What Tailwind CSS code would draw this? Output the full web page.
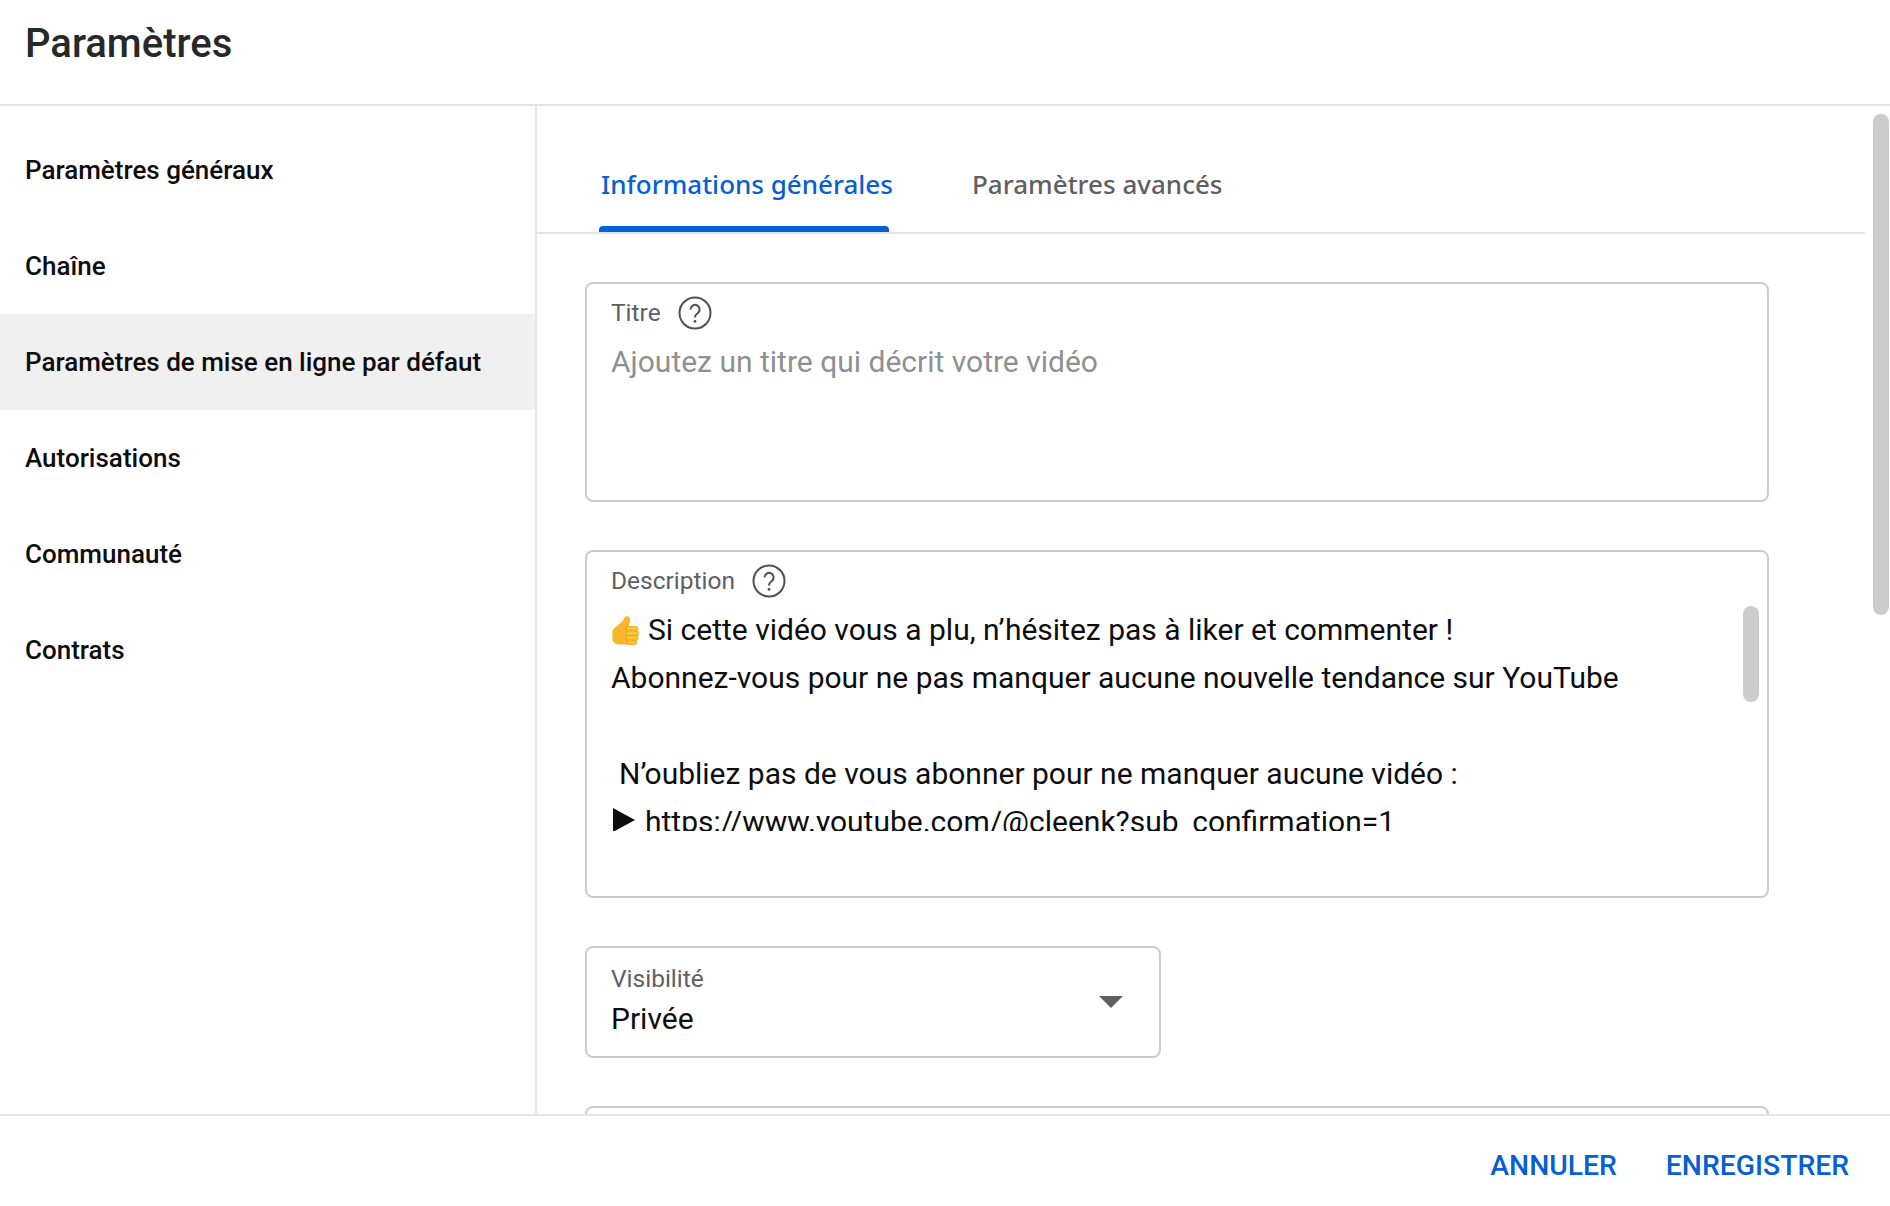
<!DOCTYPE html>
<html lang="fr">
<head>
    <meta charset="UTF-8">
    <meta name="viewport" content="width=device-width, initial-scale=1.0">
    <title>Paramètres</title>
    <script src="https://cdn.jsdelivr.net/npm/@tailwindcss/browser@4"></script>
</head>
<body class="h-screen flex flex-col overflow-hidden bg-white font-['Roboto',sans-serif] text-[#0d0d0d]">
    <header class="h-[106px] shrink-0 border-b-2 border-[#e5e5e5] pl-[25px] pt-[19px]">
        <h1 class="text-[40px] leading-[50px] font-medium text-[#282828]">Paramètres</h1>
    </header>

    <main class="flex-1 flex min-h-0">
        <nav class="w-[537px] shrink-0 border-r-2 border-[#e5e5e5] pt-4 text-[26px] font-medium">
            <a class="h-24 flex items-center pl-[25px]">Paramètres généraux</a>
            <a class="h-24 flex items-center pl-[25px]">Chaîne</a>
            <a class="h-24 flex items-center pl-[25px] bg-[#f0f0f0]">Paramètres de mise en ligne par défaut</a>
            <a class="h-24 flex items-center pl-[25px]">Autorisations</a>
            <a class="h-24 flex items-center pl-[25px]">Communauté</a>
            <a class="h-24 flex items-center pl-[25px]">Contrats</a>
        </nav>

        <section class="flex-1 relative overflow-hidden">
            <div class="h-32 mr-[25px] border-b-2 border-[#e5e5e5] flex pl-[62px] text-[26px] font-medium font-['Noto_Sans',sans-serif]">
                <div class="w-[290px] h-full flex items-center pt-[30px] pl-[2px] relative text-[#065fd4] whitespace-nowrap">
                    Informations générales
                    <span class="absolute left-0 right-0 bottom-0 h-[6px] rounded-t-[4px] bg-[#065fd4]"></span>
                </div>
                <div class="ml-[83px] h-full flex items-center pt-[30px] text-[#606060] whitespace-nowrap">Paramètres avancés</div>
            </div>

            <div class="ml-12 w-[1184px] pt-12 flex flex-col gap-12">
                <div class="h-[220px] border-2 border-[#cccccc] rounded-lg px-6 pt-3">
                    <div class="h-[34px] flex items-center gap-[17px] text-[24.500px] text-[#606060]">
                        Titre
                        <svg class="w-[34px] h-[34px]" viewBox="0 0 34 34" fill="none" stroke="#505050" stroke-width="2">
                            <circle cx="17" cy="17" r="15.500"/>
                            <path d="M12.600 13.400a4.500 4.500 0 1 1 7.200 3.600c-1.700 1.200-2.800 2.200-2.800 4.600"/>
                            <circle cx="17" cy="25.400" r="1.400" fill="#505050" stroke="none"/>
                        </svg>
                    </div>
                    <div class="mt-2 text-[30px] leading-[48px] text-[#909090]">Ajoutez un titre qui décrit votre vidéo</div>
                </div>

                <div class="h-[348px] border-2 border-[#cccccc] rounded-lg px-6 pt-3 relative">
                    <div class="h-[34px] flex items-center gap-[17px] text-[24.500px] text-[#606060]">
                        Description
                        <svg class="w-[34px] h-[34px]" viewBox="0 0 34 34" fill="none" stroke="#505050" stroke-width="2">
                            <circle cx="17" cy="17" r="15.500"/>
                            <path d="M12.600 13.400a4.500 4.500 0 1 1 7.200 3.600c-1.700 1.200-2.800 2.200-2.800 4.600"/>
                            <circle cx="17" cy="25.400" r="1.400" fill="#505050" stroke="none"/>
                        </svg>
                    </div>
                    <div class="mt-2 h-[225px] overflow-hidden text-[30px] leading-[48px]">
                        <div class="flex items-center gap-[9px]">
                            <svg class="w-[28px] h-[30px] shrink-0" viewBox="0 0 30 30" preserveAspectRatio="none">
                                <path d="M1.500 17c0-3 2.500-4.500 5.500-6.500 3.500-2.300 6-5 7.500-8 1-2 5.500-2 6 1.500.4 3-1 5.500-2 7.500v18H9c-4.500 0-7.500-2.500-7.500-6z" fill="#f9b52b"/>
                                <g fill="#fcc439" stroke="#e59a14" stroke-width="0.800">
                                    <rect x="16" y="11.500" width="13" height="5" rx="2.500"/>
                                    <rect x="16" y="16" width="13.500" height="5" rx="2.500"/>
                                    <rect x="16" y="20.500" width="13" height="5" rx="2.500"/>
                                    <rect x="16.500" y="25" width="11" height="4.500" rx="2.200"/>
                                </g>
                            </svg>
                            <span>Si cette vidéo vous a plu, n’hésitez pas à liker et commenter !</span>
                        </div>
                        <div>Abonnez-vous pour ne pas manquer aucune nouvelle tendance sur YouTube</div>
                        <div class="h-12"></div>
                        <div class="pl-2">N’oubliez pas de vous abonner pour ne manquer aucune vidéo :</div>
                        <div class="flex items-center gap-[10px] pl-[2px]">
                            <svg class="w-[22px] h-6 shrink-0 -mt-1" viewBox="0 0 22 24"><path d="M0 0l22 12L0 24z" fill="#0d0d0d"/></svg>
                            <span>https://www.youtube.com/@cleenk?sub_confirmation=1</span>
                        </div>
                    </div>
                    <span class="absolute right-2 top-[54px] w-4 h-24 rounded-lg bg-[#cccccc]"></span>
                </div>

                <div class="w-[576px] h-[112px] border-2 border-[#cccccc] rounded-lg pl-6 pr-[36px] flex items-center justify-between">
                    <div>
                        <div class="text-[24.500px] leading-[28px] text-[#606060] -mt-[1px]">Visibilité</div>
                        <div class="text-[30px] leading-[40px] mt-[6px]">Privée</div>
                    </div>
                    <svg class="w-6 h-3" viewBox="0 0 24 12"><path d="M0 0h24L12 12z" fill="#606060"/></svg>
                </div>

                <div class="h-[200px] border-2 border-[#cccccc] rounded-lg"></div>
            </div>

            <span class="absolute right-[1px] top-2 w-4 h-[501px] rounded-lg bg-[#cccccc]"></span>
        </section>
    </main>

    <footer class="h-[92px] shrink-0 border-t-2 border-[#e5e5e5] flex items-center justify-end gap-[49px] pr-[41px] pt-[10px] text-[28.300px] font-medium text-[#065fd4]">
        <button>ANNULER</button>
        <button>ENREGISTRER</button>
    </footer>
</body>
</html>
